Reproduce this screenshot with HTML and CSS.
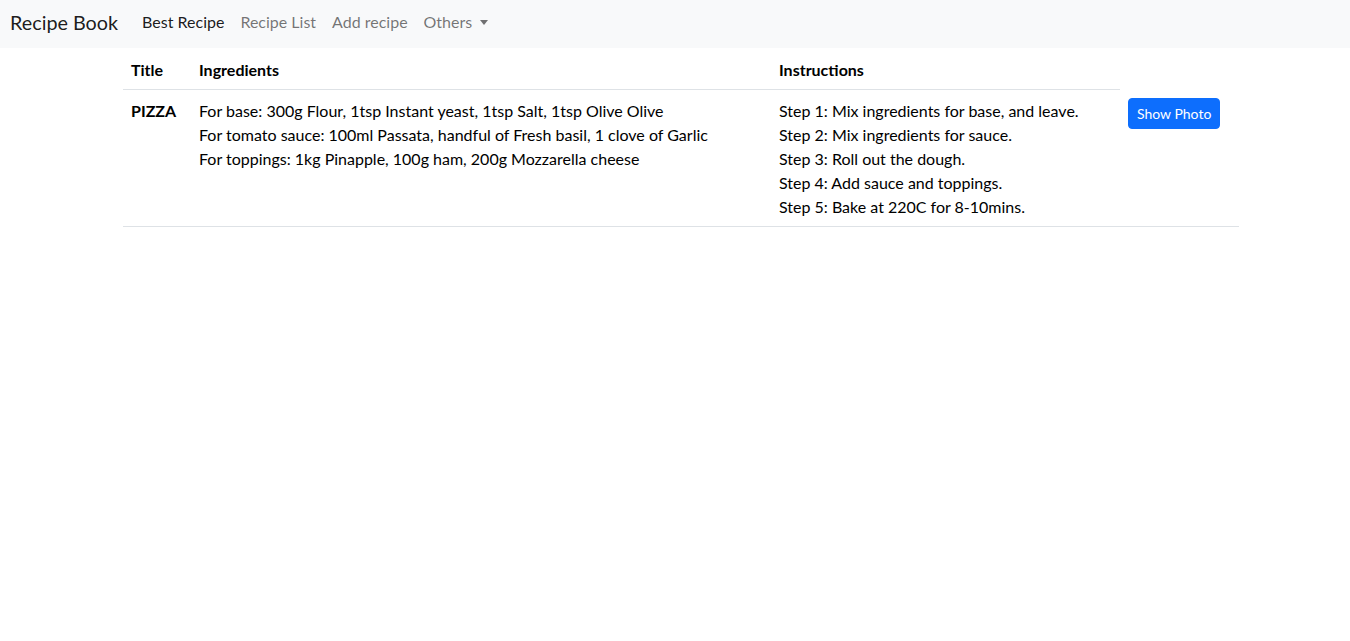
FILE: index.html
```html
<!DOCTYPE html>
<html lang="en">
<head>
<meta charset="utf-8">
<title>Recipe Book</title>
<link rel="stylesheet" href="styles.css">
</head>
<body>
<nav class="navbar">
  <a class="brand" href="#">Recipe Book</a>
  <ul class="nav">
    <li><a class="nav-link active" href="#">Best Recipe</a></li>
    <li><a class="nav-link" href="#">Recipe List</a></li>
    <li><a class="nav-link" href="#">Add recipe</a></li>
    <li><a class="nav-link dropdown-toggle" href="#">Others</a></li>
  </ul>
</nav>
<main class="container">
  <table class="recipes">
    <colgroup>
      <col class="c-title">
      <col class="c-ing">
      <col class="c-ins">
      <col class="c-btn">
    </colgroup>
    <thead>
      <tr>
        <th>Title</th>
        <th>Ingredients</th>
        <th>Instructions</th>
      </tr>
    </thead>
    <tbody>
      <tr>
        <td class="name">PIZZA</td>
        <td>For base: 300g Flour, 1tsp Instant yeast, 1tsp Salt, 1tsp Olive Olive<br>For tomato sauce: 100ml Passata, handful of Fresh basil, 1 clove of Garlic<br>For toppings: 1kg Pinapple, 100g ham, 200g Mozzarella cheese</td>
        <td>Step 1: Mix ingredients for base, and leave.<br>Step 2: Mix ingredients for sauce.<br>Step 3: Roll out the dough.<br>Step 4: Add sauce and toppings.<br>Step 5: Bake at 220C for 8-10mins.</td>
        <td class="action"><button class="btn" type="button">Show Photo</button></td>
      </tr>
    </tbody>
  </table>
</main>
</body>
</html>
```
FILE: styles.css
```css
* { box-sizing: border-box; }
body {
  margin: 0;
  font-family: Lato, "Liberation Sans", sans-serif;
  font-size: 16px;
  line-height: 24px;
  color: #212529;
  background: #fff;
}
a { text-decoration: none; }

.navbar {
  display: flex;
  align-items: center;
  height: 48px;
  padding: 0 10px;
  background: #f8f9fa;
}
.brand {
  font-size: 19.8px;
  line-height: 30px;
  color: rgba(0,0,0,.9);
  margin-right: 16px;
  padding-bottom: 5px;
}
.nav {
  display: flex;
  list-style: none;
  margin: 0;
  padding: 0;
}
.nav-link {
  display: block;
  padding: 0 8px 4px;
  color: rgba(0,0,0,.55);
  font-size: 16px;
}
.nav-link.active { color: rgba(0,0,0,.9); }
.dropdown-toggle::after {
  content: "";
  display: inline-block;
  margin-left: 8px;
  vertical-align: 3px;
  border-top: 5px solid;
  border-left: 4.5px solid transparent;
  border-right: 4.5px solid transparent;
}

.container {
  padding: 1px 111px 0 123px;
}
.recipes {
  width: 1116px;
  border-collapse: collapse;
  color: #000;
}
.c-title { width: 68px; }
.c-ing { width: 580px; }
.c-ins { width: 349px; }
.c-btn { width: 119px; }
.recipes th {
  text-align: left;
  font-weight: 700;
  padding: 9px 8px 7px;
  border-bottom: 1px solid #dee2e6;
}
.recipes td {
  vertical-align: top;
  padding: 9px 8px 7px;
  border-bottom: 1px solid #dee2e6;
}
.recipes td.name { font-weight: 700; }
.recipes td.action { padding-top: 8px; }
.btn {
  font-family: Lato, "Liberation Sans", sans-serif;
  font-size: 14px;
  line-height: 21px;
  padding: 4px 8px;
  border: 1px solid #0d6efd;
  border-radius: 4px;
  background: #0d6efd;
  color: #fff;
  cursor: pointer;
}
```
